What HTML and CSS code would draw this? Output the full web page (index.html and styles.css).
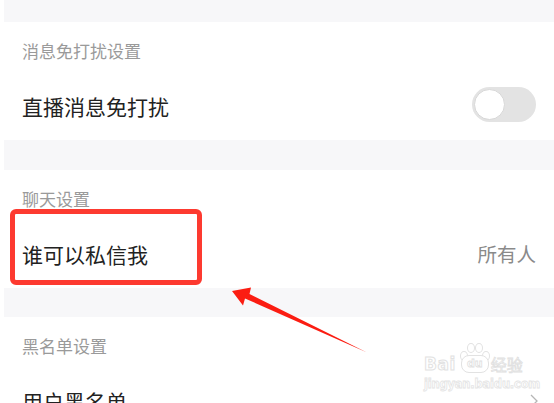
FILE: index.html
```html
<!DOCTYPE html>
<html lang="zh-CN">
<head>
<meta charset="utf-8">
<link rel="stylesheet" href="styles.css">
</head>
<body>
<div class="page">
  <div class="band band-top"></div>
  <section class="section">
    <div class="section-title">消息免打扰设置</div>
    <div class="row">
      <span class="row-label">直播消息免打扰</span>
      <span class="switch"><span class="knob"></span></span>
    </div>
  </section>
  <div class="band"></div>
  <section class="section">
    <div class="section-title">聊天设置</div>
    <div class="row">
      <span class="row-label">谁可以私信我</span>
      <span class="row-value">所有人</span>
    </div>
  </section>
  <div class="band band-short"></div>
  <section class="section">
    <div class="section-title">黑名单设置</div>
    <div class="row">
      <span class="row-label">用户黑名单</span>
      <svg class="chevron" width="8" height="14" viewBox="0 0 8 14"><polyline points="1,1 7,7 1,13" fill="none" stroke="#b5b5b5" stroke-width="1.3"/></svg>
    </div>
  </section>

  <div class="highlight"></div>
  <svg class="arrow" width="554" height="403" viewBox="0 0 554 403">
    <polygon points="232,291 251,287.5 249.5,294 367,352.5 245,298.5 243,305.5" fill="#fb1d12"/>
  </svg>
  <div class="watermark">
    <div class="wm-top">
      <span class="wm-bai">Bai</span>
      <span class="wm-paw">
        <span class="toe t1"></span><span class="toe t2"></span><span class="toe t3"></span><span class="toe t4"></span>
        <span class="wm-du">du</span>
      </span>
      <span class="wm-jy">经验</span>
    </div>
    <div class="wm-url">jingyan.baidu.com</div>
  </div>
</div>
</body>
</html>
```

FILE: styles.css
```css
html, body {
  margin: 0;
  padding: 0;
  background: #ffffff;
}
body {
  width: 554px;
  height: 403px;
  overflow: hidden;
  font-family: "Noto Sans CJK SC", "Noto Sans", sans-serif;
}
.page {
  position: relative;
  width: 554px;
  height: 403px;
  overflow: hidden;
}
.band {
  height: 30px;
  margin-left: 4px;
  background: #f7f7f9;
}
.band-top {
  height: 22px;
}
.band-short {
  height: 29px;
}
.section {
  height: 118px;
  background: #fff;
}
.section-title {
  box-sizing: border-box;
  height: 50px;
  padding: 20px 0 0 22px;
  font-size: 17px;
  line-height: 17px;
  color: #9a9a9a;
}
.row {
  box-sizing: border-box;
  height: 68px;
  display: flex;
  align-items: center;
  justify-content: space-between;
  padding: 0 18px 0 22px;
}
.row-label {
  font-size: 21px;
  line-height: 24px;
  color: #222222;
}
.row-value {
  font-size: 19.5px;
  line-height: 24px;
  color: #8a8a8a;
}
.switch {
  position: relative;
  width: 64px;
  height: 35px;
  border-radius: 18px;
  background: #e3e3e3;
  margin-top: -3px;
}
.knob {
  position: absolute;
  left: 2px;
  top: 2px;
  width: 29px;
  height: 29px;
  border-radius: 50%;
  background: #fff;
  border: 1px solid #d8d8d8;
}
.chevron {
  margin-right: -2px;
}
.highlight {
  position: absolute;
  left: 10px;
  top: 209px;
  width: 182px;
  height: 66px;
  border: 5px solid #fd3a30;
  border-radius: 6px;
}
.arrow {
  position: absolute;
  left: 0;
  top: 0;
}
.watermark {
  position: absolute;
  left: 424px;
  top: 341px;
  width: 104px;
  font-family: "DejaVu Sans", sans-serif;
  color: #fff;
}
.wm-top {
  display: flex;
  align-items: flex-end;
  height: 32px;
}
.wm-bai {
  font-size: 17px;
  font-weight: bold;
  line-height: 17px;
  -webkit-text-stroke: 1px #e2e2e2;
  letter-spacing: 0.5px;
}
.wm-paw {
  position: relative;
  width: 34px;
  height: 32px;
  margin: 0 0 0 1px;
}
.toe {
  position: absolute;
  width: 6px;
  height: 8px;
  border: 1px solid #e2e2e2;
  border-radius: 50%;
  background: #fff;
}
.t1 { left: 3px; top: 10px; }
.t2 { left: 10px; top: 2px; }
.t3 { left: 18px; top: 2px; }
.t4 { left: 25px; top: 10px; }
.wm-du {
  position: absolute;
  left: 4px;
  top: 14px;
  width: 26px;
  height: 16px;
  border: 1px solid #e2e2e2;
  border-radius: 8px;
  background: #fff;
  font-size: 11px;
  line-height: 15px;
  text-align: center;
  color: #fff;
  font-weight: bold;
  -webkit-text-stroke: 0.8px #e0e0e0;
}
.wm-jy {
  font-family: "Noto Sans CJK SC", sans-serif;
  font-size: 16px;
  line-height: 18px;
  -webkit-text-stroke: 0.8px #e0e0e0;
}
.wm-url {
  margin-top: 5px;
  font-size: 11.5px;
  line-height: 12px;
  font-weight: bold;
  -webkit-text-stroke: 0.8px #e4e4e4;
  letter-spacing: -0.2px;
}
```
